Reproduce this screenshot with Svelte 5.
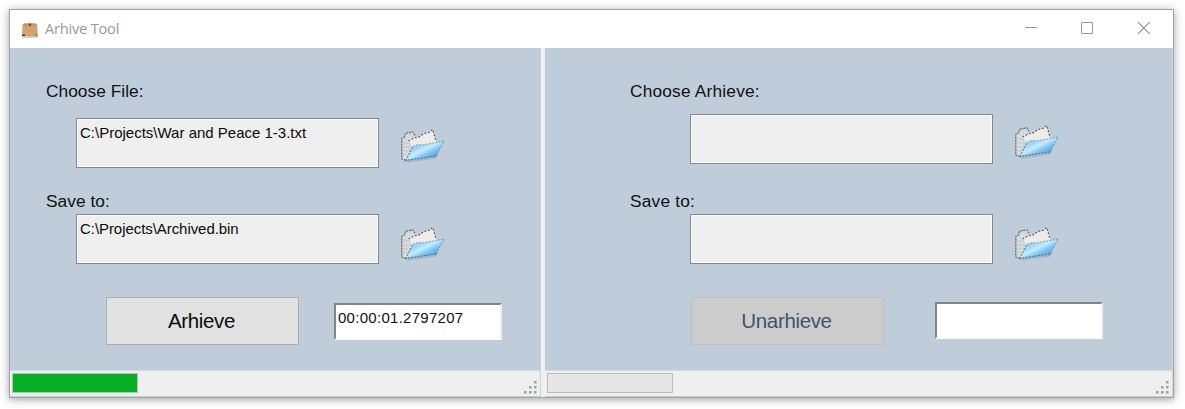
<script>
  const panes = [
    {
      side: 'left', source: 'Choose File:', action: 'Arhieve', disabled: false,
      from: 'C:\\Projects\\War and Peace 1-3.txt', to: 'C:\\Projects\\Archived.bin',
      time: '00:00:01.2797207', progress: 100
    },
    {
      side: 'right', source: 'Choose Arhieve:', action: 'Unarhieve', disabled: true,
      from: '', to: '', time: '', progress: 0
    }
  ];
  const dots = [[10, 0], [5, 5], [10, 5], [0, 10], [5, 10], [10, 10]];
</script>

{#snippet folder()}
  <svg class="folder" viewBox="0 0 46 38" width="46" height="38">
    <path d="M3 34.5 L8 36.5 L36 32.5 L39 28 Z" fill="#8fa3b5" opacity=".55" />
    <path d="M1.8 12.2 L4.5 11 L5.5 7.2 L13 5.8 L15 9.5 L18 10 L18 29 L6 34.3 L1.8 33.2 Z" fill="#d0d4d8" />
    <path d="M5 13 V33 M8 9 V31 M11 9 V27" stroke="#e6e9eb" stroke-width="1" />
    <path d="M3 17 H12 M3 21 H12 M3 25 H11 M3 29 H9" stroke="#b9bfc6" stroke-width=".7" />
    <path d="M6 34.3 L1.8 33.2 V12.2 L4.5 11 L5.5 7.2 L13 5.8 L15 9.5" fill="none" stroke="#4c5661" stroke-width="1" stroke-dasharray="2 1" />
    <path d="M8.5 15 L14 12 L19 11 L24 7.5 L29 6.5 L32.7 3.5 L36 15.5 L33 22 L12 23 Z" fill="#efebe9" />
    <path d="M8.5 15 L14 12 L19 11 L24 7.5 L29 6.5 L32.7 3.5 L36 15" fill="none" stroke="#514f50" stroke-width="1.1" stroke-dasharray="1.8 1.8" />
    <path d="M8.5 15 L12 22" stroke="#c4c4c6" stroke-width=".8" />
    <path d="M12.8 20.3 L18 18.6 L22 19 L44 15.2 L36 30 L6 34.3 Z" fill="url(#folder-front)" />
    <path d="M36 30 L6 34.3 L12.8 20.3" fill="none" stroke="#35698c" stroke-width=".9" stroke-dasharray="2 1.3" />
    <path d="M12.8 20.3 L18 18.6 L22 19 L44 15.2 L36 30" fill="none" stroke="#4b83a8" stroke-width=".7" stroke-dasharray="2 1.3" />
  </svg>
{/snippet}

<div class="window">
  <svg class="defs" width="0" height="0">
    <defs>
      <linearGradient id="folder-front" x1="0.1" y1=".1" x2=".9" y2=".9">
        <stop offset="0" stop-color="#b5e2fb" />
        <stop offset=".25" stop-color="#93d2f7" />
        <stop offset=".45" stop-color="#c4edff" />
        <stop offset=".65" stop-color="#7cc4f3" />
        <stop offset="1" stop-color="#3b91d6" />
      </linearGradient>
    </defs>
  </svg>
  <header class="titlebar">
    <svg class="box" width="18" height="16" viewBox="0 0 18 16">
      <path d="M1 13.5 H17 V15 H1 Z" fill="#cfd0d4" />
      <path d="M1.6 2 L3.4 .5 H14.4 L16.2 2 L16.8 13.4 H1 Z" fill="#d0a470" />
      <path d="M1.6 2 L3.4 .5 H14.4 L16.2 2 V3 H1.6 Z" fill="#c09562" />
      <path d="M7.6 .5 H10 V3.2 H8.4 V2.2 H7.6 Z" fill="#7e5027" />
      <path d="M1 11.6 H4 V12.8 H1 Z" fill="#231f20" />
      <path d="M14.6 11.4 H16.4 V12.8 H14.6 Z" fill="#786142" />
    </svg>
    <span class="title">Arhive Tool</span>
    <svg class="controls" width="126" height="12" viewBox="0 0 126 12">
      <path d="M0 5.5 H12" stroke="#999" fill="none" />
      <path d="M56.5 .5 H67.5 V11.5 H56.5 Z" stroke="#999" fill="none" />
      <path d="M113 .2 L124.6 11.8 M124.6 .2 L113 11.8" stroke="#8c8c8c" stroke-width="1.1" fill="none" />
    </svg>
  </header>
  <main class="panes">
    {#each panes as pane}
      <section class="pane {pane.side}">
        <div class="form">
          <div class="label">{pane.source}</div>
          <div class="row upper">
            <div class="field">{pane.from}</div>
            {@render folder()}
          </div>
          <div class="label">Save to:</div>
          <div class="row lower">
            <div class="field">{pane.to}</div>
            {@render folder()}
          </div>
          <div class="actions">
            <button disabled={pane.disabled}>{pane.action}</button>
            <div class="timer">{pane.time}</div>
          </div>
        </div>
        <footer class="status">
          <div class="progress"><div class="bar" style="width: {pane.progress}%"></div></div>
          <svg class="grip" width="13" height="13" viewBox="0 0 13 13">
            {#each dots as [x, y]}
              <rect {x} {y} width="2.5" height="2.5" fill="#a0a0a0" />
            {/each}
          </svg>
        </footer>
      </section>
    {/each}
  </main>
</div>

<style>
  :global(body) { background: #fff; overflow: hidden; }
  :global(#app) { display: flow-root; height: 409px; }
  * { box-sizing: border-box; }
  .window {
    width: 1165px; height: 389px; margin: 9px 0 0 9px;
    border: 1px solid #a3a6a9; background: #fff;
    box-shadow: 0 1px 10px rgba(0, 0, 0, .25), 0 2px 5px rgba(0, 0, 0, .15);
    font-family: "Liberation Sans", Arial, sans-serif; color: #111;
    display: flex; flex-direction: column;
  }
  .defs { flex: none; }
  .titlebar { height: 38px; flex: none; display: flex; align-items: center; padding: 0 22px 2px 11px; }
  .box { margin-top: 5px; }
  .title { margin-left: 6px; font: 400 14.6px/20px "Open Sans", sans-serif; color: #999; letter-spacing: -.2px; white-space: nowrap; margin-bottom: 1px; }
  .controls { margin-left: auto; margin-top: 0; }
  .panes { flex: 1; display: flex; gap: 4px; background: #f0f0f0; }
  .pane { display: flex; flex-direction: column; background: #bfccda; }
  .pane.left { width: 531px; border-right: 1px solid #c9d5e1; }
  .pane.right { flex: 1; border-right: 1px solid #cad6e2; }
  .form { flex: 1; padding: 33px 0 0 36px; }
  .right .form { padding-left: 85px; }
  .label { height: 20px; font-size: 17.3px; line-height: 20px; white-space: nowrap; letter-spacing: .05px; }
  .right .label { letter-spacing: .2px; }
  .row { display: flex; margin-left: 30px; height: 50px; }
  .right .row { margin-left: 60px; }
  .upper { margin-top: 17px; margin-bottom: 23px; }
  .right .upper { margin-top: 13px; margin-bottom: 27px; }
  .lower { margin-top: 3px; }
  .field {
    width: 303px; height: 50px; border: 1px solid #85888c; background: #efefef;
    box-shadow: inset 0 0 0 1px #fbfbfb; padding: 4px 0 0 3px;
    font-size: 15px; line-height: 20px; white-space: nowrap; color: #0b0b0b;
  }
  .lower .field { padding-top: 4px; letter-spacing: -.06px; }
  .folder { margin: 8px 0 0 21px; }
  .lower .folder { margin-top: 10px; }
  .actions { display: flex; margin: 33px 0 0 60px; }
  .right .actions { margin-left: 61px; }
  button {
    width: 193px; height: 48px; padding: 0 2px 0 0; margin: 0; border: 1px solid #adadad; border-radius: 0;
    background: #e1e1e1; color: #0b0b0b; font: 20.5px/46px "Liberation Sans", Arial, sans-serif; letter-spacing: -.35px;
  }
  button:disabled { background: #ccc; border-color: #bfbfbf; color: #41536a; }
  .timer {
    width: 168px; height: 37px; margin: 6px 0 0 35px; background: #fff;
    border: 2px solid; border-color: #858585 #efefef #fafafa #858585;
    padding: 3px 0 0 2px; font-size: 15px; line-height: 20px; letter-spacing: .28px; white-space: nowrap;
  }
  .right .timer { margin: 5px 0 0 51px; }
  .status {
    height: 26px; margin-bottom: 1px; background: #efefef; border-top: 1px solid #d5dae1;
    display: flex; align-items: flex-start; justify-content: space-between; padding: 2px 2px 0;
  }
  .progress { width: 126px; height: 20px; border: 1px solid #bcbcbc; background: #e6e6e6; }
  .left .progress { border-color: #b3c9b6; }
  .bar { height: 100%; background: #06b025; }
  .grip { margin: 8px 1px 0 0; }
</style>
